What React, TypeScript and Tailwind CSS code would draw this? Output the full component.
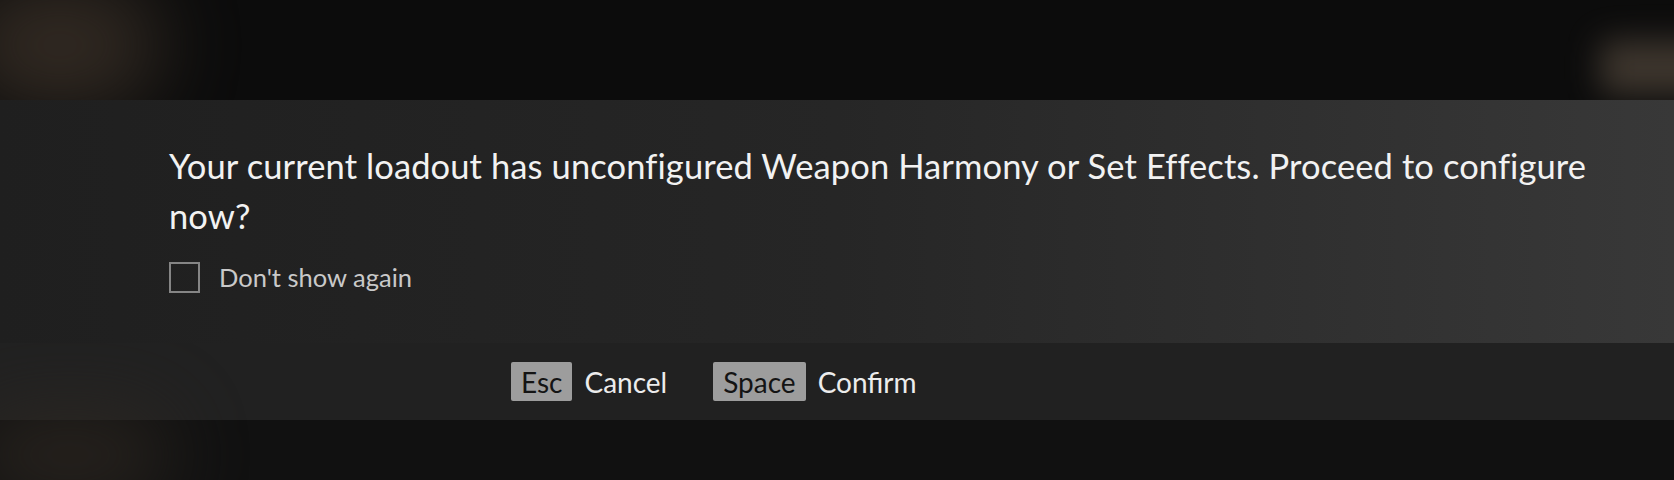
import React from "react";

function KeyHint({ k, label }: { k: string; label: string }) {
  return (
    <div className="flex items-center gap-3">
      <span className="h-[39px] px-[10px] flex items-center rounded-[2px] bg-[#9d9d9d] text-[#141414] text-[28px] leading-none">
        {k}
      </span>
      <span className="text-[#ececec] text-[28px] leading-none">{label}</span>
    </div>
  );
}

export default function App() {
  return (
    <div
      className="relative w-[1674px] h-[480px] overflow-hidden bg-[#0c0c0c] flex flex-col"
      style={{ fontFamily: "Lato, 'Open Sans', sans-serif" }}
    >
      {/* blurred backdrop shapes */}
      <div className="absolute left-[-40px] top-[-20px] w-[200px] h-[130px] rounded-full bg-[#3b3128] blur-2xl opacity-80" />
      <div className="absolute left-[-30px] top-[410px] w-[200px] h-[90px] rounded-full bg-[#2e2822] blur-2xl opacity-80" />
      <div className="absolute left-[1600px] top-[40px] w-[120px] h-[55px] rounded-lg bg-[#4a4036] blur-lg opacity-80" />

      <div className="h-[100px] shrink-0" />

      <div className="relative shrink-0 h-[243px] bg-gradient-to-r from-[#1f1f1f] via-[#262626] to-[#383838] pl-[169px] pt-[41px]">
        <p className="w-[1420px] text-[34.5px] leading-[50px] text-[#f2f2f2] tracking-[0.1px]">
          Your current loadout has unconfigured Weapon Harmony or Set Effects. Proceed to configure now?
        </p>
        <label className="mt-[21px] flex items-center gap-[19px]">
          <span className="w-[31px] h-[31px] border-2 border-[#858585]" />
          <span className="text-[25.5px] leading-none text-[#c9c9c9]">Don't show again</span>
        </label>
      </div>

      <div className="shrink-0 h-[77px] bg-[#212121] flex items-center pl-[511px] gap-[46px]">
        <KeyHint k="Esc" label="Cancel" />
        <KeyHint k="Space" label="Confirm" />
      </div>

      <div className="flex-1 bg-[#111111]" />
    </div>
  );
}
